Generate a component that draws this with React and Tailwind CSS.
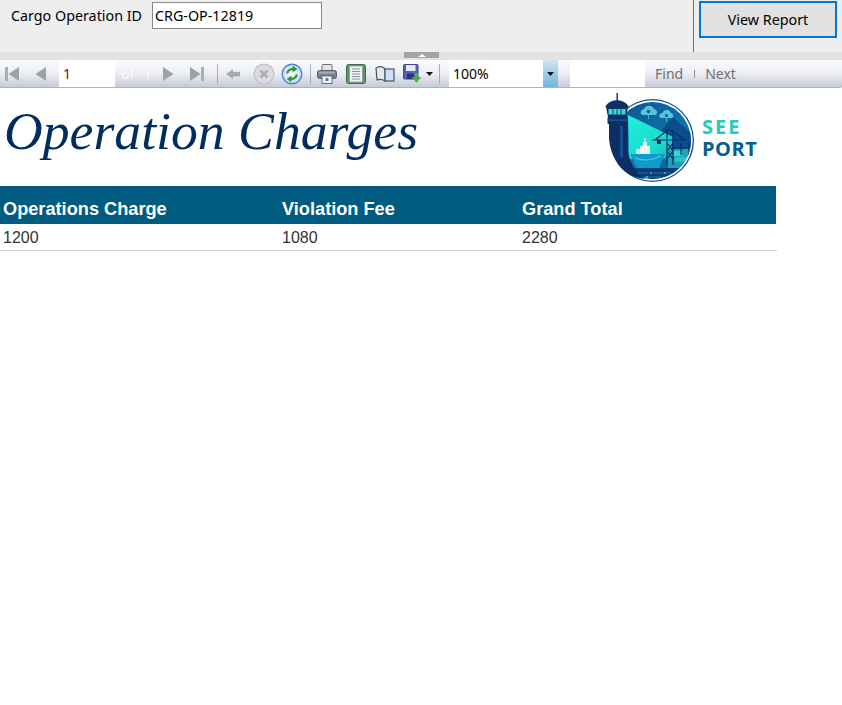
import React from "react";

const Sep = () => <div className="w-px h-[20px] bg-[#a9adb8] shrink-0" />;

const Nav = ({ flip, bar }) => (
  <svg width="16" height="16" viewBox="0 0 16 16" className={flip ? "block -scale-x-100" : "block"}>
    <path d="M14 1 L14 15 L3.5 8 Z" fill="#9da1a8" />
    {bar && <rect x="0" y="1" width="3" height="14" fill="#a9adb4" />}
  </svg>
);

const Back = () => (
  <svg width="16" height="16" viewBox="0 0 16 16" className="block">
    <path d="M1 8 L8 3 L8 5.8 L15 5.8 L15 10.5 L8 10.5 L8 13 Z" fill="#a7abb2" />
  </svg>
);

const Stop = () => (
  <svg width="22" height="22" viewBox="0 0 22 22" className="block">
    <circle cx="11" cy="11" r="9.8" fill="#dcdde3" stroke="#c2c4cb" strokeWidth="1.4" />
    <path d="M7.5 7.5 L14.5 14.5 M14.5 7.5 L7.5 14.5" stroke="#acaeb6" strokeWidth="2.8" />
  </svg>
);

const Refresh = () => (
  <svg width="22" height="22" viewBox="0 0 22 22" className="block">
    <defs>
      <radialGradient id="rf" cx="0.5" cy="0.5" r="0.6">
        <stop offset="0" stopColor="#ffffff" />
        <stop offset="1" stopColor="#b8d2f2" />
      </radialGradient>
    </defs>
    <circle cx="11" cy="11" r="9.8" fill="url(#rf)" stroke="#4f86d0" strokeWidth="1.4" />
    <path d="M6.2 10.5 A5 5 0 0 1 12 6.2" fill="none" stroke="#2f9a35" strokeWidth="2.2" />
    <path d="M11.5 2.8 L16.5 6 L11.5 9.5 Z" fill="#2f9a35" />
    <path d="M15.8 11.5 A5 5 0 0 1 10 15.8" fill="none" stroke="#2f9a35" strokeWidth="2.2" />
    <path d="M10.5 12.5 L5.5 16 L10.5 19.2 Z" fill="#2f9a35" />
  </svg>
);

const Printer = () => (
  <svg width="20" height="20" viewBox="0 0 20 20" className="block">
    <rect x="5" y="0.5" width="10" height="7" rx="1" fill="#e4e5e9" stroke="#6c7078" />
    <rect x="0.5" y="6.5" width="19" height="8" rx="2" fill="#787d86" stroke="#5b5f67" />
    <rect x="2" y="7.5" width="16" height="2.2" fill="#a8acb4" />
    <rect x="5" y="12" width="10" height="7.5" fill="#f5f6f8" stroke="#6c7078" />
    <rect x="8.5" y="14" width="3" height="3" fill="#3d7fd0" />
  </svg>
);

const Layout = () => (
  <svg width="20" height="20" viewBox="0 0 20 20" className="block">
    <rect x="0.5" y="0.5" width="19" height="19" rx="2" fill="#5c9460" stroke="#3f6f44" />
    <rect x="3.5" y="2" width="13" height="16" fill="#eef1f6" stroke="#8d99a8" strokeWidth="0.8" />
    <path d="M6 5H14M6 7.5H14M6 10H14M6 12.5H14M6 15H14" stroke="#8b94a3" strokeWidth="1" />
  </svg>
);

const Book = () => (
  <svg width="20" height="18" viewBox="0 0 20 18" className="block">
    <path d="M1 3 Q4 0.5 8.5 2.5 L10 4 L10 16 Q6 13.5 2 15 Z" fill="#e6e8ed" stroke="#4e535b" strokeWidth="1.2" />
    <rect x="10" y="4" width="9" height="12" fill="#cfe0f6" stroke="#4e535b" strokeWidth="1.2" />
  </svg>
);

const Save = () => (
  <svg width="20" height="20" viewBox="0 0 20 20" className="block">
    <rect x="0.5" y="0.5" width="14.5" height="14.5" rx="1" fill="#5563b5" stroke="#3c4690" />
    <rect x="3" y="1" width="9.5" height="6" fill="#e6e9f5" />
    <rect x="4" y="9.5" width="7" height="5.5" fill="#2d3570" />
    <path d="M11.5 9 L15 9 L15 13 L18.5 13 L13.5 18.8 L8.5 13 L11.5 13 Z" fill="#3fb53c" />
  </svg>
);

const Caret = ({ className }) => (
  <svg width="7" height="4" viewBox="0 0 7 4" className={className}>
    <path d="M0 0 H7 L3.5 4 Z" fill="#111" />
  </svg>
);

const Logo = () => (
  <svg width="92" height="92" viewBox="0 0 92 92" className="block shrink-0">
    <defs>
      <linearGradient id="sky" x1="0.2" y1="0" x2="0.8" y2="1">
        <stop offset="0" stopColor="#0e4f92" />
        <stop offset="0.55" stopColor="#0f72a8" />
        <stop offset="1" stopColor="#0b5e9c" />
      </linearGradient>
      <linearGradient id="beam" x1="0" y1="0" x2="1" y2="1">
        <stop offset="0" stopColor="#20f2da" />
        <stop offset="0.7" stopColor="#1cd8cc" />
        <stop offset="1" stopColor="#14aec0" />
      </linearGradient>
      <clipPath id="disc"><circle cx="47.5" cy="47.5" r="38.5" /></clipPath>
    </defs>
    <circle cx="47.5" cy="47.5" r="41.5" fill="#11508f" />
    <circle cx="47.5" cy="47.5" r="40.2" fill="#fff" />
    <g clipPath="url(#disc)">
      <rect x="0" y="0" width="92" height="92" fill="url(#sky)" />
      <path d="M52 42 L68 24 L90 44 L90 62 L52 62 Z" fill="#0d4d8e" />
      <path d="M23 22 L68 44 L66 62 L58 66 L24 66 Z" fill="url(#beam)" />
      <path d="M36 21 a3.5 3.5 0 0 1 3-5 a5.5 5.5 0 0 1 10 0 a3.5 3.5 0 0 1 2 6 h-13 a2.5 2.5 0 0 1 -2 -1Z" fill="#55c4d8" />
      <circle cx="43.5" cy="18.5" r="1.8" fill="#0c5b99" />
      <path d="M43.5 22 V26" stroke="#55c4d8" strokeWidth="0.8" />
      <path d="M54.5 24 a3 3 0 0 1 3-4 a4.5 4.5 0 0 1 8.5 0 a3 3 0 0 1 1.5 5 h-11.5 a2 2 0 0 1 -1.5 -1Z" fill="#55c4d8" />
      <circle cx="61.5" cy="22.5" r="1.5" fill="#0c5b99" />
      <path d="M61.5 25 V29" stroke="#55c4d8" strokeWidth="0.8" />
      <rect x="63" y="56" width="24" height="19" fill="#17a7b8" />
      <rect x="68" y="58" width="9" height="5" fill="#38d6c8" />
      <rect x="70" y="64" width="12" height="5" fill="#2bc0c2" />
      <rect x="65" y="69" width="19" height="5" fill="#1c9eb2" />
      <path d="M47 47 H82 M64 36 L50 47 M64 36 L80 47 M62 37 V72 M68 37 V72 M62 50 L68 58 M68 50 L62 58 M62 58 L68 66 M68 58 L62 66" stroke="#083064" strokeWidth="1.2" fill="none" />
      <path d="M66 55 H88 M76 50 V62 M84 50 V62" stroke="#083064" strokeWidth="1.2" fill="none" />
      <rect x="52" y="47" width="4" height="4" fill="#083064" />
      <path d="M25 61 L60 61 L54 75 L32 75 Z" fill="#0f9cc8" />
      <path d="M30 65 Q42 70 56 63" stroke="#7fe6ea" strokeWidth="0.7" fill="none" />
      <rect x="31" y="56" width="5" height="5" fill="#bfeef0" />
      <rect x="35" y="53" width="10" height="8" fill="#e6fbfa" />
      <rect x="38" y="49" width="4" height="4" fill="#f2fdfc" />
      <rect x="39.5" y="45" width="1" height="4" fill="#f2fdfc" />
      <rect x="0" y="75" width="92" height="17" fill="#0a3a78" />
      <path d="M22 80 H44 M48 80 H66 M32 84 H56" stroke="#1f86ad" strokeWidth="0.8" />
      <circle cx="30" cy="80" r="0.9" fill="#34c6cf" /><circle cx="46" cy="80" r="0.9" fill="#34c6cf" /><circle cx="60" cy="80" r="0.9" fill="#34c6cf" /><circle cx="42" cy="84" r="0.9" fill="#34c6cf" />
    </g>
    <path d="M4 30 H23 V60 Q27 78 40 86 Q20 84 11 68 Q5 58 4 46 Z" fill="#0c2f66" />
    <path d="M15 33 H18 V64 H15 Z" fill="#1a4f8e" />
    <rect x="11.5" y="0" width="1.4" height="7" fill="#0c2f66" />
    <path d="M0 14 Q3 8 12 7 Q21 8 24 14 Z" fill="#0c2f66" />
    <path d="M1 14 H23 L21 24 H3 Z" fill="#0c2f66" />
    <rect x="3.5" y="16" width="17" height="5.5" fill="#3fd8cf" />
    <path d="M8 16V21.5M12 16V21.5M16 16V21.5" stroke="#0c2f66" strokeWidth="0.9" />
    <rect x="2.5" y="24" width="20" height="7" rx="1" fill="#0c2f66" />
    <rect x="3.5" y="26.5" width="18" height="1.2" fill="#1d5d9b" />
  </svg>
);

export default function App() {
  return (
    <div className="w-[842px] h-[705px] bg-white overflow-hidden font-['Noto_Sans','Open_Sans',sans-serif]">
      <div className="h-[52px] bg-[#eeeeee] flex">
        <div className="w-[693px] flex items-start pl-[11px] pt-[2px] gap-[10px]">
          <span className="text-[14.3px] leading-[27px] text-black">Cargo Operation ID</span>
          <div className="w-[170px] h-[27px] bg-white border border-[#8a8a8a] pl-[2px] text-[14.3px] leading-[25px] text-black">CRG-OP-12819</div>
        </div>
        <div className="w-px h-[52px] bg-[#6e6e6e]" />
        <div className="pl-[5px] pt-px">
          <div className="w-[138px] h-[37px] bg-[#e1e1e1] border-2 border-[#0078d7] flex items-center justify-center text-[14.3px] text-black">View Report</div>
        </div>
      </div>

      <div className="h-[8px] bg-[#e3e3e3] relative">
        <div className="absolute left-[404px] top-0 w-[35px] h-[6px] bg-[#a4a4a4] flex justify-center items-center">
          <div className="w-0 h-0 border-x-[4px] border-x-transparent border-b-[3px] border-b-white" />
        </div>
      </div>

      <div className="h-[28px] w-[842px] rounded-br-[2px] border-b border-[#aeb2c2] bg-gradient-to-b from-[#fbfbfe] via-[#eceef5] to-[#c6cad9] flex items-center">
        <div className="w-[24px] pl-[5px]"><Nav bar /></div>
        <div className="w-[35px] pl-[8px]"><Nav /></div>
        <div className="w-[56px] h-[27px] self-start bg-white pl-[4px] text-[14px] leading-[27px] text-[#7a0c0c]">1</div>
        <div className="w-[45px] pl-[6px] text-[14px] text-[#f8f9fc] flex gap-[9px]"><span>of</span><span>1</span></div>
        <div className="w-[28px] pl-px"><Nav flip /></div>
        <div className="w-[29px]"><Nav flip bar /></div>
        <Sep />
        <div className="w-[26px] pl-[7px]"><Back /></div>
        <div className="w-[36px] pl-[9px]"><Stop /></div>
        <div className="w-[30px] pl-px"><Refresh /></div>
        <Sep />
        <div className="w-[35px] pl-[6px]"><Printer /></div>
        <div className="w-[29px]"><Layout /></div>
        <div className="w-[28px]"><Book /></div>
        <div className="w-[36px] flex items-center"><Save /><Caret className="ml-[3px] shrink-0" /></div>
        <Sep />
        <div className="w-[9px]" />
        <div className="w-[109px] h-[27px] self-start bg-white flex">
          <div className="w-[94px] pl-[4px] text-[14px] leading-[27px] text-black">100%</div>
          <div className="w-[15px] h-[27px] bg-gradient-to-b from-[#cfe4f3] to-[#72b3dc] flex items-center justify-center"><Caret /></div>
        </div>
        <div className="w-[12px]" />
        <div className="w-[75px] h-[27px] self-start bg-white" />
        <div className="pl-[10px] text-[14px] text-[#6f6f6f]">Find</div>
        <div className="ml-[11px] mr-[10px] w-px h-[8px] bg-[#8c8c8c]" />
        <div className="text-[14px] text-[#6f6f6f]">Next</div>
      </div>

      <div className="w-[777px]">
        <div className="h-[98px] flex">
          <div className="w-[605px] pl-[4px] pt-[8px] font-['Liberation_Serif',serif] italic text-[53.7px] leading-[70px] text-[#002c5f] whitespace-nowrap">Operation Charges</div>
          <div className="h-[96px] pt-[5px]"><Logo /></div>
          <div className="flex flex-col gap-[2px] pl-[5px] pt-[29px] font-['Open_Sans',sans-serif] font-bold text-[20px] leading-[20px]">
            <span className="text-[#1fcdbb] tracking-[2px]">SEE</span>
            <span className="text-[#00608e] tracking-[0.5px]">PORT</span>
          </div>
        </div>
        <div className="grid grid-cols-[279px_240px_1fr] h-[38px] bg-[#005b80] items-center pt-[10px] font-['Liberation_Sans',sans-serif] font-bold text-[18.2px] text-white w-[776px]">
          <div className="pl-[3px]">Operations Charge</div>
          <div className="pl-[3px]">Violation Fee</div>
          <div className="pl-[3px]">Grand Total</div>
        </div>
        <div className="grid grid-cols-[279px_240px_1fr] h-[27px] items-center pt-[2px] border-b border-[#d3d3d3] font-['Liberation_Sans',sans-serif] text-[16px] text-[#333333]">
          <div className="pl-[3px]">1200</div>
          <div className="pl-[3px]">1080</div>
          <div className="pl-[3px]">2280</div>
        </div>
      </div>
    </div>
  );
}
